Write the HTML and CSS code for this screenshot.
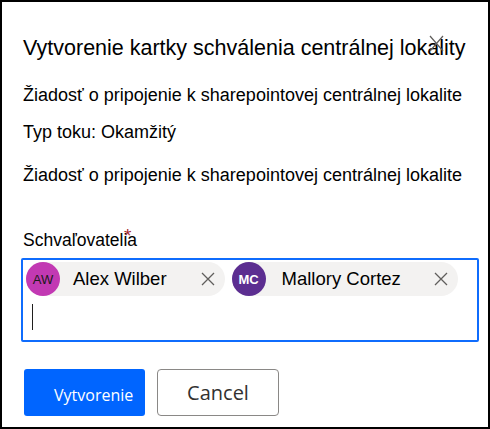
FILE: index.html
```html
<!DOCTYPE html>
<html lang="sk">
<head>
    <meta charset="UTF-8">
    <title>Vytvorenie kartky schválenia</title>
    <link rel="stylesheet" href="styles.css">
</head>
<body>
    <div class="dialog">
        <button class="dialog-close" aria-label="Zavrieť">
            <svg width="15" height="17" viewBox="0 0 15 17"><path d="M1 1 L14 16 M14 1 L1 16" stroke="#605e5c" stroke-width="1.2" fill="none"/></svg>
        </button>
        <h1 class="title">Vytvorenie kartky schválenia centrálnej lokality</h1>

        <p class="line line-first">Žiadosť o pripojenie k sharepointovej centrálnej lokalite</p>
        <p class="line line-type">Typ toku: Okamžitý</p>
        <p class="line line-third">Žiadosť o pripojenie k sharepointovej centrálnej lokalite</p>

        <label class="field-label" for="approvers">Schvaľovatelia<span class="required">*</span></label>
        <div class="picker">
            <div class="chips">
                <div class="chip chip-alex">
                    <span class="avatar avatar-aw">AW</span>
                    <span class="chip-name">Alex Wilber</span>
                    <span class="chip-remove">
                        <svg width="14" height="14" viewBox="0 0 14 14"><path d="M1 1 L13 13 M13 1 L1 13" stroke="#605e5c" stroke-width="1.3" fill="none"/></svg>
                    </span>
                </div>
                <div class="chip chip-mallory">
                    <span class="avatar avatar-mc">MC</span>
                    <span class="chip-name">Mallory Cortez</span>
                    <span class="chip-remove">
                        <svg width="14" height="14" viewBox="0 0 14 14"><path d="M1 1 L13 13 M13 1 L1 13" stroke="#605e5c" stroke-width="1.3" fill="none"/></svg>
                    </span>
                </div>
            </div>
            <div class="picker-input" id="approvers"><span class="caret"></span></div>
        </div>

        <div class="actions">
            <button class="btn btn-primary">Vytvorenie</button>
            <button class="btn btn-default">Cancel</button>
        </div>
    </div>
</body>
</html>
```

FILE: styles.css
```css
body {
    margin: 0;
    font-family: "Liberation Sans", Arial, sans-serif;
    color: #000;
    background: #fff;
}
.dialog {
    position: relative;
    box-sizing: border-box;
    width: 490px;
    height: 429px;
    border: 2px solid #000;
    padding: 33px 0 0 21px;
}
.dialog-close {
    position: absolute;
    left: 427px;
    top: 33px;
    width: 15px;
    height: 17px;
    padding: 0;
    border: none;
    background: none;
}
.dialog-close svg {
    display: block;
}
.title {
    margin: 0;
    font-size: 21.5px;
    line-height: 26px;
    font-weight: normal;
}
.line {
    margin: 0;
    font-size: 18px;
    line-height: 22px;
}
.line-first {
    margin-top: 23px;
}
.line-type {
    margin-top: 15px;
}
.line-third {
    margin-top: 21px;
}
.field-label {
    position: relative;
    display: inline-block;
    margin-top: 43px;
    font-size: 17.5px;
    line-height: 22px;
}
.required {
    position: absolute;
    left: 101px;
    top: -4px;
    color: #a4262c;
    font-size: 19px;
}
.picker {
    box-sizing: border-box;
    width: 458px;
    height: 84px;
    margin: 7px 0 0 -2px;
    padding: 2px 3px;
    border: 2px solid #0f6cfd;
    border-radius: 2px;
}
.chips {
    display: flex;
    gap: 7px;
}
.chip {
    display: flex;
    align-items: center;
    height: 34px;
    border-radius: 17px;
    background: #f3f2f1;
}
.avatar {
    display: flex;
    align-items: center;
    justify-content: center;
    width: 34px;
    height: 34px;
    border-radius: 50%;
    font-size: 13px;
}
.avatar-aw {
    background: #c239b3;
    color: #1b1a19;
}
.avatar-mc {
    background: #5c2e91;
    color: #fff;
    font-weight: bold;
}
.chip-name {
    font-size: 18.5px;
    margin-left: 13px;
}
.chip-mallory .chip-name {
    margin-left: 16px;
}
.chip-remove {
    display: flex;
    margin-left: 34px;
    margin-right: 10px;
}
.chip-mallory .chip-remove {
    margin-left: 33px;
}
.picker-input {
    height: 34px;
    padding: 8px 0 0 6px;
    box-sizing: border-box;
}
.caret {
    display: block;
    width: 1px;
    height: 26px;
    background: #201f1e;
}
.actions {
    display: flex;
    gap: 12px;
    margin: 27px 0 0 1px;
}
.btn {
    box-sizing: border-box;
    height: 47px;
    font-family: "Open Sans", "Noto Sans", sans-serif;
    cursor: pointer;
}
.btn-primary {
    width: 121px;
    padding: 4px 8px 0 30px;
    border: none;
    border-radius: 3px;
    background: #0065ff;
    color: #fff;
    font-size: 16px;
    text-align: left;
}
.btn-default {
    width: 122px;
    border: 1px solid #8a8886;
    border-radius: 4px;
    background: #fff;
    color: #323130;
    font-size: 20px;
}
```
